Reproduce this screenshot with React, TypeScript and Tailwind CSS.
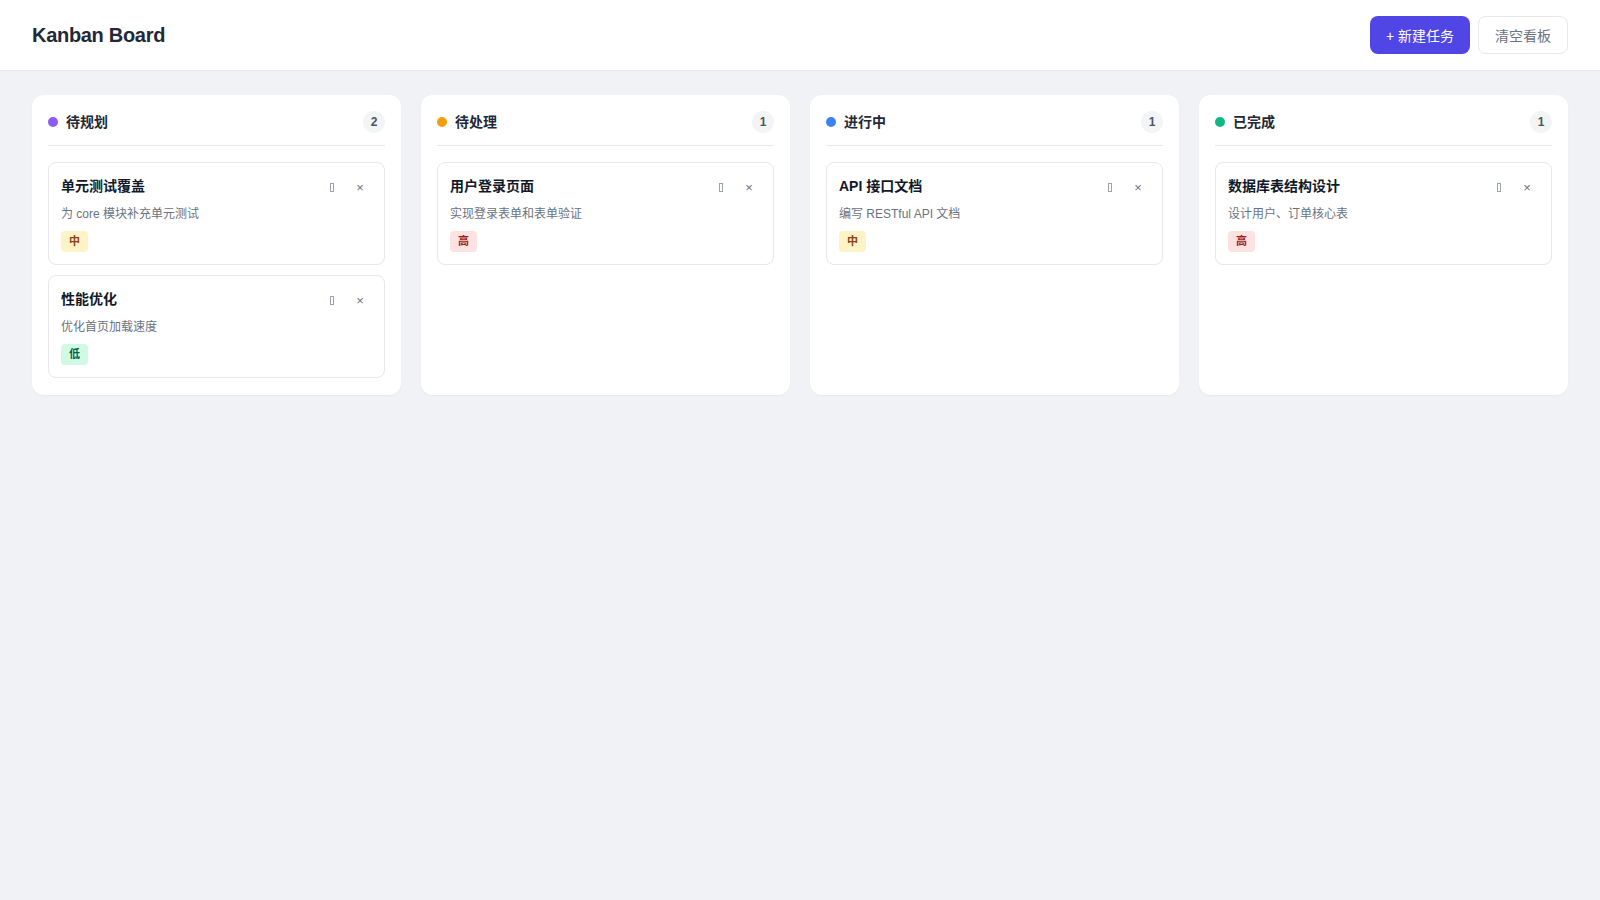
import React from "react";

type Priority = "高" | "中" | "低";
type Task = { title: string; desc: string; priority: Priority };
type Column = { name: string; dot: string; tasks: Task[] };

const columns: Column[] = [
  {
    name: "待规划",
    dot: "bg-[#8b5cf6]",
    tasks: [
      { title: "单元测试覆盖", desc: "为 core 模块补充单元测试", priority: "中" },
      { title: "性能优化", desc: "优化首页加载速度", priority: "低" },
    ],
  },
  {
    name: "待处理",
    dot: "bg-[#f59e0b]",
    tasks: [{ title: "用户登录页面", desc: "实现登录表单和表单验证", priority: "高" }],
  },
  {
    name: "进行中",
    dot: "bg-[#3b82f6]",
    tasks: [{ title: "API 接口文档", desc: "编写 RESTful API 文档", priority: "中" }],
  },
  {
    name: "已完成",
    dot: "bg-[#10b981]",
    tasks: [{ title: "数据库表结构设计", desc: "设计用户、订单核心表", priority: "高" }],
  },
];

const badgeClass: Record<Priority, string> = {
  高: "bg-[#fee2e2] text-[#991b1b]",
  中: "bg-[#fef3c7] text-[#92400e]",
  低: "bg-[#d1fae5] text-[#065f46]",
};

function Card({ task }: { task: Task }) {
  return (
    <div className="rounded-lg border border-[#e5e7eb] bg-white px-3 pt-3 pb-3">
      <div className="flex h-6 items-center justify-between">
        <div className="-mt-[2px] text-sm font-semibold leading-5 text-[#111827]">{task.title}</div>
        <div className="flex items-center gap-1">
          <button className="flex h-6 w-6 items-center justify-center">
            <span className="block h-[9px] w-[4px] border border-[#9ca3af]" />
          </button>
          <button className="flex h-6 w-6 items-center justify-center text-[13px] leading-none text-[#6b7280]">
            ×
          </button>
        </div>
      </div>
      <div className="mt-[7px] text-xs leading-4 text-[#6b7280]">{task.desc}</div>
      <div className="mt-[9px] flex">
        <span
          className={`rounded px-2 py-0.5 text-[11px] font-bold leading-[17px] ${badgeClass[task.priority]}`}
        >
          {task.priority}
        </span>
      </div>
    </div>
  );
}

export default function App() {
  return (
    <div
      className="min-h-[900px] bg-[#f0f2f5]"
      style={{ fontFamily: '"Liberation Sans", "Noto Sans CJK SC", sans-serif' }}
    >
      <header className="flex h-[71px] items-center justify-between border-b border-[#e5e7eb] bg-white px-8">
        <h1 className="text-xl font-bold tracking-[-0.3px] text-[#1f2937]">Kanban Board</h1>
        <div className="flex items-center gap-2">
          <button className="h-[38px] rounded-lg bg-[#4f46e5] px-4 pt-[2px] text-sm text-white">+ 新建任务</button>
          <button className="h-[38px] rounded-lg border border-[#e5e7eb] bg-white px-4 pt-[2px] text-sm text-[#6b7280]">
            清空看板
          </button>
        </div>
      </header>
      <main className="grid grid-cols-4 gap-5 px-8 pt-6">
        {columns.map((col) => (
          <section key={col.name} className="rounded-xl bg-white p-4 pb-[17px] shadow-[0_1px_2px_rgba(0,0,0,0.04)]">
            <div className="flex items-center justify-between border-b border-[#e5e7eb] pb-3">
              <div className="flex items-center gap-2">
                <span className={`h-2.5 w-2.5 rounded-full ${col.dot}`} />
                <span className="text-sm font-semibold text-[#1f2937]">{col.name}</span>
              </div>
              <span className="flex h-[22px] w-[22px] items-center justify-center rounded-full bg-[#f3f4f6] text-xs font-semibold text-[#4b5563]">
                {col.tasks.length}
              </span>
            </div>
            <div className="mt-4 flex flex-col gap-2.5">
              {col.tasks.map((t) => (
                <Card key={t.title} task={t} />
              ))}
            </div>
          </section>
        ))}
      </main>
    </div>
  );
}
